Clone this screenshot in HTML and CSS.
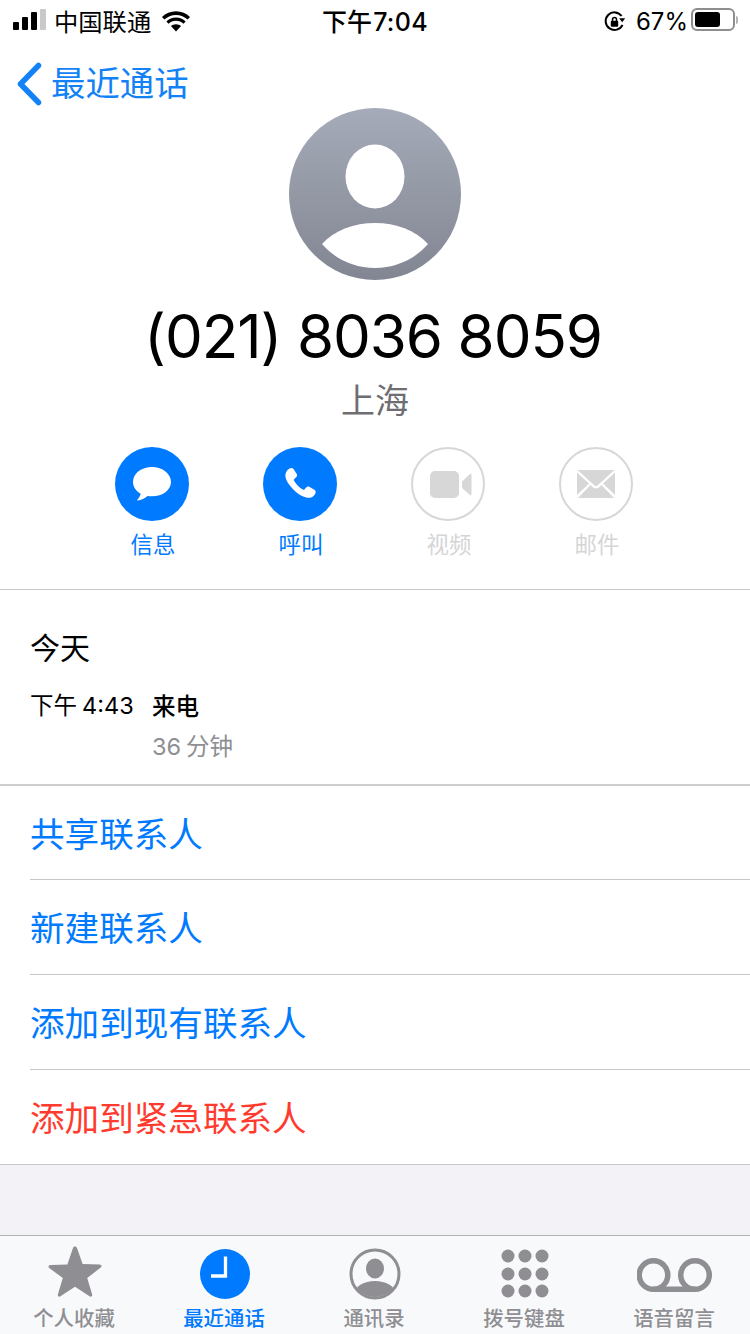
FILE: index.html
```html
<!DOCTYPE html>
<html lang="zh">
<head>
<meta charset="utf-8">
<title>最近通话</title>
<link rel="stylesheet" href="styles.css">
</head>
<body>
<div class="page">
  <div class="status">
    <div class="status-left">
      <span class="signal"><i class="b1"></i><i class="b2"></i><i class="b3"></i><i class="b4"></i></span>
      <span class="carrier">中国联通</span>
      <svg class="wifi" width="32" height="23" viewBox="0 0 30 22"><path d="M15 4.800c4.300 0 8.200 1.700 11.100 4.400l2.300-2.500C24.900 3.300 20.200 1.200 15 1.200S5.100 3.300 1.600 6.700l2.300 2.500C6.800 6.500 10.700 4.800 15 4.800z"/><path d="M15 10.400c2.800 0 5.300 1.100 7.200 2.800l2-2.200c-2.500-2.300-5.600-3.800-9.200-3.800s-6.700 1.500-9.200 3.800l2 2.200c1.900-1.700 4.400-2.800 7.200-2.800z"/><path d="M15 13.600c-1.900 0-3.500.7-4.800 1.800L15 20.500l4.800-5.100c-1.300-1.100-2.900-1.800-4.800-1.800z"/></svg>
    </div>
    <div class="clock">下午<span class="clock-digits">7:04</span></div>
    <div class="status-right">
      <svg class="lock" width="24" height="24" viewBox="0 0 24 24"><path d="M19.500 14.800A8.800 8.800 0 1 1 18.600 6" fill="none" stroke="#000" stroke-width="2"/><path d="M16.200 8.200h6l-3 4z"/><rect x="7.800" y="10.800" width="7.400" height="6" rx="1"/><path d="M9.500 11V9.500a2 2 0 0 1 4 0V11" fill="none" stroke="#000" stroke-width="1.500"/></svg>
      <span class="percent">67%</span>
      <span class="battery"><span class="battery-fill"></span></span>
      <span class="battery-cap"></span>
    </div>
  </div>

  <div class="nav">
    <svg class="chevron" width="26" height="44" viewBox="0 0 26 44"><path d="M22.500 3.500 4.500 22l18 18.500" fill="none" stroke="#1382f6" stroke-width="5.500" stroke-linecap="round" stroke-linejoin="round"/></svg>
    <span class="back-text">最近通话</span>
  </div>

  <div class="avatar">
    <svg width="172" height="172" viewBox="0 0 172 172">
      <defs><linearGradient id="ag" x1="0" y1="0" x2="0" y2="1"><stop offset="0" stop-color="#a6abb9"/><stop offset="1" stop-color="#828692"/></linearGradient></defs>
      <circle cx="86" cy="86" r="86" fill="url(#ag)"/>
      <ellipse cx="86" cy="68.500" rx="29.500" ry="32" fill="#fff"/>
      <path d="M33 136C46 122 65 115 86 115s40 7 53 21c-13 15-32 24-53 24s-40-9-53-24z" fill="#fff"/>
    </svg>
  </div>
  <div class="number">(021) 8036 8059</div>
  <div class="place">上海</div>

  <div class="actions">
    <div class="action">
      <span class="disc">
        <svg width="44" height="40" viewBox="0 0 44 40"><path d="M22 3C11.300 3 3 9.700 3 17.900c0 5 3.100 9.200 7.700 11.900-.4 2-1.700 4.200-3.200 5.600-.5.500-.2 1.100.5 1 3-.1 6.900-2.200 9.500-4.500 1.500.3 3 .4 4.500.4 10.700 0 19-6.400 19-14.400S32.700 3 22 3z" fill="#fff"/></svg>
      </span>
      <span class="action-label">信息</span>
    </div>
    <div class="action">
      <span class="disc">
        <svg width="40" height="40" viewBox="0 0 40 40"><path d="M9.500 4.500c1.600-1 3.200-.8 4.200.7l2.900 4.600c.8 1.300.6 2.500-.5 3.500l-1.800 1.600c-.5.500-.6 1-.2 1.800 1.700 3.300 5.500 7.100 8.700 8.800.8.400 1.300.3 1.800-.3l1.600-1.800c1-1.100 2.200-1.300 3.500-.5l4.600 2.800c1.500 1 1.800 2.600.8 4.200-1.800 3-5 4.500-8.500 3.700-4.500-1-9.500-4.200-13.500-8.400S6 17 5.400 12.800C5 9.200 6.500 6.300 9.500 4.500z" fill="#fff"/></svg>
      </span>
      <span class="action-label">呼叫</span>
    </div>
    <div class="action is-off">
      <span class="disc">
        <svg class="video" width="44" height="32" viewBox="0 0 44 32"><rect x="1" y="3" width="29" height="27" rx="5" fill="#d7d7d8"/><path d="M33 13.500 41 6c.8-.6 1.500-.2 1.500.8v19.500c0 1-.7 1.400-1.500.8L33 20z" fill="#d7d7d8"/></svg>
      </span>
      <span class="action-label">视频</span>
    </div>
    <div class="action is-off">
      <span class="disc">
        <svg width="40" height="30" viewBox="0 0 40 30"><path d="M1.500 1h37L21.500 16.500c-.9.800-2.100.800-3 0z" fill="#d7d7d8"/><path d="M1 3.500 13 14.500 1 26z" fill="#d7d7d8"/><path d="M39 3.500 27 14.500 39 26z" fill="#d7d7d8"/><path d="M2 29 14.500 16l3 2.700c1.400 1.100 3.600 1.100 5 0l3-2.700L38 29z" fill="#d7d7d8"/></svg>
      </span>
      <span class="action-label">邮件</span>
    </div>
  </div>

  <div class="recent">
    <div class="day">今天</div>
    <div class="call">
      <span class="call-time">下午<span class="time-digits">4:43</span></span>
      <div class="call-info">
        <span class="call-type">来电</span>
        <span class="call-len"><span class="len-digits">36</span>分钟</span>
      </div>
    </div>
  </div>

  <div class="list">
    <div class="row">共享联系人</div>
    <div class="row">新建联系人</div>
    <div class="row">添加到现有联系人</div>
    <div class="row is-danger">添加到紧急联系人</div>
  </div>

  <div class="spacer"></div>

  <div class="tabs">
    <div class="tab">
      <span class="tab-icon">
        <svg class="star" width="56" height="52" viewBox="0 0 56 52"><path d="M28 1.500c1 0 1.700.6 2.100 1.800l5.500 15.700 16.700.4c2.400.1 3 2 1.100 3.400L40.200 33l4.800 16c.7 2.200-1 3.400-2.800 2.100L28 41.700 13.800 51.100c-1.800 1.300-3.500.1-2.800-2.100l4.800-16L2.600 23.300c-1.900-1.400-1.300-3.300 1.100-3.400l16.700-.4 5.500-16.200c.4-1.200 1.100-1.800 2.100-1.800z" fill="#8e8e93"/></svg>
      </span>
      <span class="tab-label">个人收藏</span>
    </div>
    <div class="tab is-active">
      <span class="tab-icon">
        <svg width="50" height="50" viewBox="0 0 50 50"><circle cx="25" cy="25" r="25" fill="#007aff"/><path d="M25.500 7.500V27H11" fill="none" stroke="#fff" stroke-width="3.300"/></svg>
      </span>
      <span class="tab-label">最近通话</span>
    </div>
    <div class="tab">
      <span class="tab-icon">
        <svg width="52" height="52" viewBox="0 0 52 52"><defs><clipPath id="cc"><circle cx="26" cy="26" r="23"/></clipPath></defs><circle cx="26" cy="26" r="24" fill="none" stroke="#8e8e93" stroke-width="3"/><ellipse cx="26" cy="20.500" rx="9" ry="10" fill="#8e8e93"/><ellipse cx="26" cy="45" rx="20" ry="12" fill="#8e8e93" clip-path="url(#cc)"/></svg>
      </span>
      <span class="tab-label">通讯录</span>
    </div>
    <div class="tab">
      <span class="tab-icon">
        <svg width="50" height="50" viewBox="0 0 50 50" fill="#8e8e93"><circle cx="8" cy="7" r="6.500"/><circle cx="25" cy="7" r="6.500"/><circle cx="42" cy="7" r="6.500"/><circle cx="8" cy="25" r="6.500"/><circle cx="25" cy="25" r="6.500"/><circle cx="42" cy="25" r="6.500"/><circle cx="8" cy="42" r="6.500"/><circle cx="25" cy="42" r="6.500"/><circle cx="42" cy="42" r="6.500"/></svg>
      </span>
      <span class="tab-label">拨号键盘</span>
    </div>
    <div class="tab">
      <span class="tab-icon">
        <svg width="76" height="52" viewBox="0 0 76 52"><circle cx="16.500" cy="27" r="14.300" fill="none" stroke="#8e8e93" stroke-width="5.500"/><circle cx="58" cy="27" r="14.300" fill="none" stroke="#8e8e93" stroke-width="5.500"/><path d="M16.500 41.300H58" stroke="#8e8e93" stroke-width="5.500" fill="none"/></svg>
      </span>
      <span class="tab-label">语音留言</span>
    </div>
  </div>
</div>
</body>
</html>
```
FILE: styles.css
```css
* { box-sizing: border-box; }
html, body { margin: 0; padding: 0; }
body {
  background: #fff;
  font-family: Inter, "Noto Sans CJK SC", sans-serif;
  color: #000;
}
.page {
  width: 750px;
  height: 1334px;
  display: flex;
  flex-direction: column;
  overflow: hidden;
}
.status {
  height: 40px;
  display: grid;
  grid-template-columns: 1fr auto 1fr;
  align-items: center;
  padding: 3px 13px 0;
  flex: none;
}
.status-left, .status-right { display: flex; align-items: center; }
.status-right { justify-content: flex-end; }
.signal { display: flex; align-items: flex-end; gap: 3px; height: 21px; width: 33px; margin-bottom: 4px; }
.signal i { display: block; width: 6px; background: #000; border-radius: 1px; }
.signal .b1 { height: 8px; }
.signal .b2 { height: 13px; }
.signal .b3 { height: 18px; }
.signal .b4 { height: 21px; background: #c9c9c9; }
.carrier { font-size: 24.3px; margin-left: 8px; line-height: 30px; }
.wifi { margin-left: 9px; }
.clock { font-size: 25px; font-weight: 500; line-height: 30px; }
.clock-digits { margin-left: 1px; letter-spacing: .3px; }
.lock { margin-right: 9px; }
.percent { font-size: 24px; line-height: 30px; margin-right: 3px; }
.battery {
  width: 44px;
  height: 23px;
  border: 2px solid #8e8e8e;
  border-radius: 6px;
  padding: 2px;
  display: block;
  margin-bottom: 4px;
}
.battery-fill { display: block; width: 25px; height: 15px; background: #000; border-radius: 3px; }
.battery-cap { width: 2px; height: 8px; background: #b5b5b5; margin: 0 -1px 4px 1px; border-radius: 0 2px 2px 0; }
.nav {
  height: 68px;
  display: flex;
  align-items: center;
  padding: 19px 0 0 16px;
  flex: none;
}
.back-text { font-size: 34.4px; color: #1382f6; margin-left: 9px; line-height: 44px; }
.avatar { display: flex; justify-content: center; height: 172px; flex: none; }
.number { font-size: 60px; line-height: 72px; text-align: center; margin-top: 20px; padding-right: 4px; letter-spacing: -1.1px; flex: none; }
.place { font-size: 34px; line-height: 44px; text-align: center; color: #6d6d72; margin-top: 7px; flex: none; }
.actions {
  display: flex;
  justify-content: center;
  gap: 74px;
  margin-top: 24px;
  height: 122px;
  flex: none;
  padding-right: 2px;
}
.action { width: 74px; display: flex; flex-direction: column; align-items: center; }
.disc {
  width: 74px;
  height: 74px;
  border-radius: 50%;
  background: #007aff;
  display: flex;
  align-items: center;
  justify-content: center;
}
.video { margin-left: 5px; }
.action-label { font-size: 22.4px; color: #007aff; line-height: 30px; margin: 9px 0 0 2px; }
.is-off .disc { background: #fff; border: 2px solid #d7d7d8; }
.is-off .action-label { color: #d5d5d6; }
.recent {
  height: 195px;
  flex: none;
  border-top: 1px solid #c8c8c8;
  padding: 38px 0 0 30px;
  margin-top: 20px;
}
.day { font-size: 30px; line-height: 40px; }
.call { display: flex; margin-top: 20px; }
.call-time { font-size: 23.5px; width: 122px; line-height: 36px; }
.time-digits { margin-left: 5px; }
.call-info { display: flex; flex-direction: column; }
.call-type { font-size: 23.6px; font-weight: 500; line-height: 36px; margin-top: 1px; }
.call-len { font-size: 23.5px; color: #8e8e93; line-height: 36px; margin-top: 4px; }
.len-digits { margin-right: 5px; }
.list { flex: none; border-top: 2px solid #cfcfcf; border-bottom: 1px solid #c8c8c8; }
.row {
  height: 95px;
  margin-left: 30px;
  padding-bottom: 2px;
  border-top: 1px solid #c8c8c8;
  font-size: 34.6px;
  color: #007aff;
  display: flex;
  align-items: center;
}
.row:first-child { border-top: 0; height: 93px; }
.is-danger { color: #ff3b30; }
.spacer { flex: 1; background: #f2f2f7; }
.tabs {
  height: 99px;
  flex: none;
  display: flex;
  background: #f8f9fa;
  border-top: 1px solid #b2b2b5;
  padding-top: 12px;
}
.tab { width: 150px; display: flex; flex-direction: column; align-items: center; }
.tab-icon { height: 52px; display: flex; align-items: center; justify-content: center; }
.star { margin-bottom: 7px; }
.tab-label { font-size: 20.4px; line-height: 26px; color: #8e8e93; font-weight: 500; margin: 6px 2px 0 0; }
.is-active .tab-label { color: #007aff; }
```
